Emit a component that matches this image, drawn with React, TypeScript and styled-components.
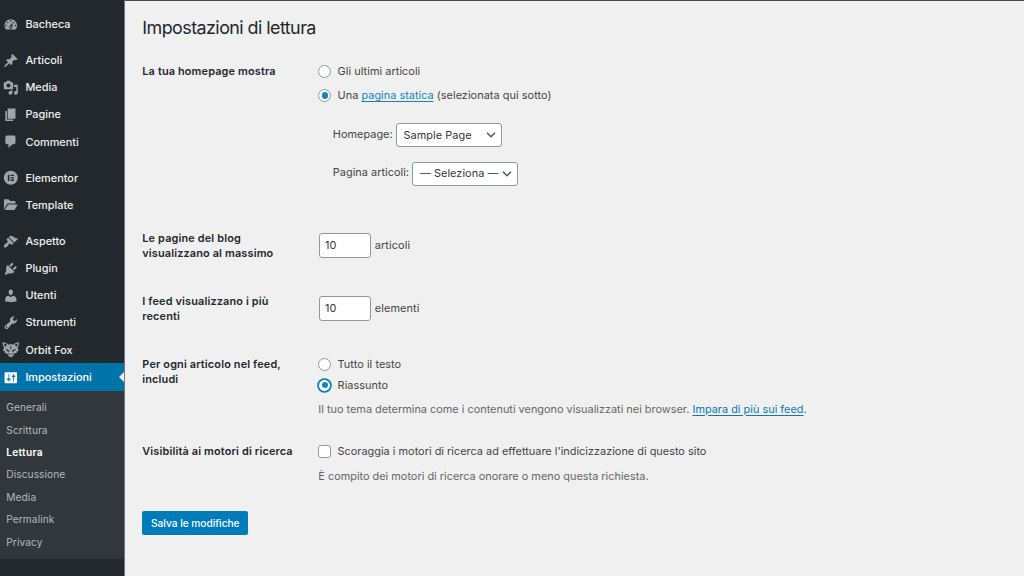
import React from 'react';
import styled, { createGlobalStyle, css } from 'styled-components';

const GlobalStyle = createGlobalStyle`
  *, *::before, *::after { box-sizing: border-box; }
  body {
    margin: 0;
    background: #f0f0f1;
    color: #444;
    font-family: Inter, "Liberation Sans", sans-serif;
    font-size: 10.9px;
    line-height: 15px;
    overflow: hidden;
  }
`;

const Page = styled.div`
  display: flex;
  height: 576px;
  overflow: hidden;
`;

/* ---------- sidebar ---------- */

const Sidebar = styled.nav`
  flex: none;
  width: 125px;
  height: 576px;
  padding-top: 10.4px;
  background: #23282d;
  border-right: 1px solid #75787b;
  overflow: hidden;
`;

const MenuGroup = styled.div`
  margin-bottom: 8.9px;
`;

const MenuItem = styled.a<{ $active?: boolean }>`
  position: relative;
  display: flex;
  align-items: center;
  gap: 6.8px;
  height: 27.2px;
  padding: 0.8px 0 0 3px;
  color: #eee;
  font-weight: 500;
  white-space: nowrap;
  svg { color: #a0a5aa; }
  ${p => p.$active && css`
    background: #0073aa;
    color: #fff;
    svg { color: #fff; }
    &::after {
      content: '';
      position: absolute;
      right: -1px;
      top: 7.6px;
      border: 6.2px solid transparent;
      border-left-width: 0;
      border-right-color: #f0f0f1;
    }
  `}
`;

const Icon = styled.svg`
  flex: none;
  width: 15.6px;
  height: 15.6px;
  fill: currentColor;
  overflow: visible;
`;

const SubMenu = styled.div`
  height: 168.7px;
  padding: 6px 0 0 6.3px;
  background: #32373c;
`;

const SubItem = styled.a<{ $current?: boolean }>`
  display: flex;
  align-items: center;
  height: 22.4px;
  font-size: 10.2px;
  letter-spacing: 0.06px;
  color: #b4b9be;
  ${p => p.$current && css`
    color: #fff;
    font-weight: 600;
    letter-spacing: 0.25px;
  `}
`;

const CollapseRow = styled.div`
  padding: 15.8px 0 0 4px;
  height: 17px;
  overflow: hidden;
  color: #a0a5aa;
`;

/* ---------- content ---------- */

const Content = styled.main`
  flex: 1;
  padding: 13px 0 0 17.3px;
  border-top: 1px solid #4a494f;
`;

const Title = styled.h1`
  margin: 0 0 18px;
  height: 28px;
  color: #23282d;
  font-size: 17.9px;
  font-weight: 400;
  line-height: 28px;
  letter-spacing: -0.55px;
`;

const Field = styled.section<{ $height: number }>`
  display: grid;
  grid-template-columns: 176px 1fr;
  align-items: start;
  height: ${p => p.$height}px;
`;

const FieldLabel = styled.div<{ $offset?: number }>`
  margin-top: ${p => p.$offset ?? 3}px;
  color: #23282d;
  font-weight: 600;
  letter-spacing: 0.15px;
  white-space: pre-line;
`;

const FieldBody = styled.div`
  display: flex;
  flex-direction: column;
  align-items: flex-start;
  letter-spacing: 0.05px;
  white-space: nowrap;
`;

const Choice = styled.label<{ $height?: number; $tight?: boolean }>`
  display: flex;
  align-items: center;
  gap: 6.3px;
  height: ${p => p.$height ?? 21}px;
  ${p => p.$tight && css`letter-spacing: 0.01px;`}
`;

const Radio = styled.span<{ $checked?: boolean; $focused?: boolean }>`
  display: flex;
  align-items: center;
  justify-content: center;
  width: 13px;
  height: 13px;
  border: 1px solid ${p => (p.$focused ? '#007cba' : '#9099a2')};
  border-radius: 50%;
  background: #fff;
  box-shadow: ${p => (p.$focused ? '0 0 0 0.8px #007cba' : 'none')};
  ${p => p.$checked && css`
    &::before {
      content: '';
      width: 6.4px;
      height: 6.4px;
      border-radius: 50%;
      background: #1684ba;
    }
  `}
`;

const Checkbox = styled.span`
  width: 13px;
  height: 13px;
  border: 1px solid #9099a2;
  border-radius: 3px;
  background: #fff;
`;

const Link = styled.a<{ $soft?: boolean }>`
  color: ${p => (p.$soft ? '#1684ba' : '#0d78af')};
  text-decoration: underline;
  text-underline-offset: 1.5px;
  text-decoration-thickness: 1px;
  letter-spacing: 0.01px;
`;

const SelectRow = styled.div<{ $top: number }>`
  display: flex;
  align-items: flex-start;
  gap: 3.4px;
  margin-top: ${p => p.$top}px;
  padding-left: 14.5px;
  height: 24px;
  > span { padding-top: 3.6px; letter-spacing: 0.03px; }
`;

const Select = styled.div`
  display: flex;
  align-items: center;
  justify-content: space-between;
  width: 106px;
  height: 24px;
  padding: 0 5.5px 0 6.5px;
  border: 1px solid #9099a2;
  border-radius: 3px;
  background: #fff;
  color: #32373c;
`;

const Chevron = styled.svg`
  width: 10px;
  height: 6px;
  fill: none;
  stroke: #50555a;
  stroke-width: 1.5;
`;

const NumberRow = styled.div`
  display: flex;
  align-items: center;
  gap: 3.8px;
  padding-left: 0.7px;
  letter-spacing: 0.1px;
`;

const NumberBox = styled.div`
  display: flex;
  align-items: center;
  width: 52px;
  height: 25px;
  padding-left: 5px;
  border: 1px solid #9099a2;
  border-radius: 3px;
  background: #fff;
  color: #32373c;
  letter-spacing: 0.2px;
`;

const Description = styled.p<{ $top: number }>`
  margin: ${p => p.$top}px 0 0;
  color: #666;
  letter-spacing: 0.004px;
`;

const SaveButton = styled.button`
  display: block;
  width: 106px;
  height: 24px;
  padding: 0;
  border: 0;
  border-radius: 2px;
  background: #007cba;
  color: #fff;
  font: 500 10.2px/24px Inter, "Liberation Sans", sans-serif;
  letter-spacing: -0.03px;
`;

/* ---------- data ---------- */

const icons: Record<string, string> = {
  dashboard: 'M3.76 16h12.48c1.1-1.37 1.76-3.11 1.76-5 0-4.42-3.58-8-8-8s-8 3.58-8 8c0 1.89.66 3.63 1.76 5zM10 4c.55 0 1 .45 1 1s-.45 1-1 1-1-.45-1-1 .45-1 1-1zM6 6c.55 0 1 .45 1 1s-.45 1-1 1-1-.45-1-1 .45-1 1-1zm8 0c.55 0 1 .45 1 1s-.45 1-1 1-1-.45-1-1 .45-1 1-1zm-5.37 5.55L12 7v6c0 1.1-.9 2-2 2s-2-.9-2-2c0-.57.24-1.08.63-1.45zM4 10c.55 0 1 .45 1 1s-.45 1-1 1-1-.45-1-1 .45-1 1-1zm12 0c.55 0 1 .45 1 1s-.45 1-1 1-1-.45-1-1 .45-1 1-1zm-5 3c0-.55-.45-1-1-1s-1 .45-1 1 .45 1 1 1 1-.45 1-1z',
  pin: 'M10.44 3.02l1.82-1.82 6.36 6.35-1.83 1.82c-1.05-.68-2.48-.57-3.41.36l-.75.75c-.92.93-1.04 2.35-.35 3.41l-1.83 1.82-2.41-2.41-2.8 2.79c-.42.42-3.38 2.71-3.8 2.29s1.86-3.39 2.28-3.81l2.79-2.79L4.1 9.36l1.83-1.82c1.05.69 2.48.57 3.4-.36l.75-.75c.93-.92 1.05-2.35.36-3.41z',
  media: 'M13 11V4c0-.55-.45-1-1-1h-1.67L9 1H5L3.67 3H2c-.55 0-1 .45-1 1v7c0 .55.45 1 1 1h10c.55 0 1-.45 1-1zM7 4.5c1.38 0 2.5 1.12 2.5 2.5S8.38 9.5 7 9.5 4.5 8.38 4.5 7 5.62 4.5 7 4.5zM14 6h5v10.5c0 1.38-1.12 2.5-2.5 2.5S14 17.88 14 16.5s1.12-2.5 2.5-2.5c.17 0 .34.02.5.05V9h-3V6zm-4 8.05V13h2v3.5c0 1.38-1.12 2.5-2.5 2.5S7 17.88 7 16.5 8.12 14 9.5 14c.17 0 .34.02.5.05z',
  page: 'M6 15V2h10v13H6zm-1 1h8v2H3V5h2v11z',
  comment: 'M5 2h9c1.1 0 2 .9 2 2v7c0 1.1-.9 2-2 2h-2l-5 5v-5H5c-1.1 0-2-.9-2-2V4c0-1.1.9-2 2-2z',
  elementor: 'M10 1a9 9 0 1 0 0 18a9 9 0 1 0 0-18zM6.2 6h1.9v8H6.2zM9.7 6h4.3v1.7H9.7zM9.7 9.15h4.3v1.7H9.7zM9.7 12.3h4.3V14H9.7z',
  folder: 'M1.2 16.2V4.2c0-.7.5-1.2 1.2-1.2h4.8l2 2.2h5.6c.7 0 1.2.5 1.2 1.2v1.8H6.8c-.8 0-1.5.4-1.9 1.1zM2.2 16.8l3.6-6.3c.3-.5.7-.8 1.3-.8h11.8l-3.6 6.3c-.3.5-.8.8-1.4.8z',
  brush: 'M14.48 11.06L7.41 3.99l1.5-1.5c.5-.56 2.3-.47 3.51.32 1.21.8 1.43 1.28 2.91 2.1 1.18.64 2.45 1.26 4.45.85zm-.71.71L6.7 4.7 4.93 6.47c-.39.39-.39 1.02 0 1.41l1.06 1.06c.39.39.39 1.03 0 1.42-.6.6-1.43 1.11-2.21 1.69-.35.26-.7.53-1.01.84C1.43 14.23.4 16.08 1.4 17.07c.99 1 2.84-.03 4.18-1.36.31-.31.58-.66.85-1.02.57-.78 1.08-1.61 1.69-2.21.39-.39 1.02-.39 1.41 0l1.06 1.06c.39.39 1.02.39 1.41 0z',
  plugin: 'M13.11 4.36L9.87 7.6 8 5.73l3.24-3.24c.35-.34 1.05-.2 1.56.32.52.51.66 1.21.31 1.55zm-8 1.77l.91-1.12 9.01 9.01-1.19.84c-.71.71-2.63 1.16-3.82 1.16H6.14L4.9 17.26c-.59.59-1.54.59-2.12 0-.59-.58-.59-1.53 0-2.12l1.24-1.24v-3.88c0-1.13.4-3.19 1.09-3.89zm7.26 3.97l3.24-3.24c.34-.35 1.04-.21 1.55.31.52.51.66 1.21.31 1.55l-3.24 3.25z',
  user: 'M10 9.25c-2.27 0-2.73-3.44-2.73-3.44C7 4.02 7.82 2 9.97 2c2.16 0 2.98 2.02 2.71 3.81 0 0-.41 3.44-2.68 3.44zm0 2.57L12.72 10c2.39 0 4.52 2.33 4.52 4.53v2.49s-3.65 1.13-7.24 1.13c-3.65 0-7.24-1.13-7.24-1.13v-2.49c0-2.25 1.94-4.48 4.47-4.48z',
  wrench: 'M16.68 9.77c-1.34 1.34-3.3 1.67-4.95.99l-5.41 6.52c-.99.99-2.59.99-3.58 0s-.99-2.59 0-3.57l6.52-5.42c-.68-1.65-.35-3.61.99-4.95 1.28-1.28 3.12-1.62 4.72-1.06l-2.89 2.89 2.82 2.82 2.86-2.87c.53 1.58.18 3.39-1.08 4.65zM3.81 16.21c.4.39 1.04.39 1.43 0 .4-.4.4-1.04 0-1.43-.39-.4-1.03-.4-1.43 0-.39.39-.39 1.03 0 1.43z',
  fox: 'M-.4 .2C2.6 .2 5 1.6 6.8 3.4C8.8 2.8 11.2 2.8 13.2 3.4C15 1.6 17.4 .2 20.4 .2C20.6 2.8 19.8 5.4 18.6 7.2L20.2 11.6L17.8 11.8L17.6 14L15 14.4L12.6 18.4L10 19.6L7.4 18.4L5 14.4L2.4 14L2.2 11.8L-.2 11.6L1.4 7.2C.2 5.4-.6 2.8-.4 .2zM1.2 1.8C1.4 3.6 1.9 4.8 2.6 6L5 3.8C4 2.8 2.6 2 1.2 1.8zM18.8 1.8C17.4 2 16 2.8 15 3.8L17.4 6C18.1 4.8 18.6 3.6 18.8 1.8zM3.4 8.2L8.6 11.2L8 12.4C6 12.4 4.2 10.8 3.4 8.2zM16.6 8.2L11.4 11.2L12 12.4C14 12.4 15.8 10.8 16.6 8.2zM9.4 5h1.2v4.4H9.4zM6.2 13.6L9.2 15.4L8.8 16.6C7.6 16 6.8 15 6.2 13.6zM13.8 13.6L10.8 15.4L11.2 16.6C12.4 16 13.2 15 13.8 13.6z',
  settings: 'M18 16V4c0-.55-.45-1-1-1H3c-.55 0-1 .45-1 1v12c0 .55.45 1 1 1h14c.55 0 1-.45 1-1zM8 11h1c.55 0 1 .45 1 1s-.45 1-1 1H8v1.5c0 .28-.22.5-.5.5s-.5-.22-.5-.5V13H6c-.55 0-1-.45-1-1s.45-1 1-1h1V5.5c0-.28.22-.5.5-.5s.5.22.5.5V11zm5-2h-1c-.55 0-1-.45-1-1s.45-1 1-1h1V5.5c0-.28.22-.5.5-.5s.5.22.5.5V7h1c.55 0 1 .45 1 1s-.45 1-1 1h-1v5.5c0 .28-.22.5-.5.5s-.5-.22-.5-.5V9z',
  collapse: 'M10 2.2a8 8 0 1 0 0 16a8 8 0 1 0 0-16zM12.6 14.6L6.8 10.2l5.8-4.4z',
};

const menu: [string, string][][] = [
  [['dashboard', 'Bacheca']],
  [['pin', 'Articoli'], ['media', 'Media'], ['page', 'Pagine'], ['comment', 'Commenti']],
  [['elementor', 'Elementor'], ['folder', 'Template']],
];

const adminMenu: [string, string][] = [
  ['brush', 'Aspetto'],
  ['plugin', 'Plugin'],
  ['user', 'Utenti'],
  ['wrench', 'Strumenti'],
  ['fox', 'Orbit Fox'],
];

const subMenu = ['Generali', 'Scrittura', 'Lettura', 'Discussione', 'Media', 'Permalink', 'Privacy'];

function Glyph({ name }: { name: string }) {
  return (
    <Icon viewBox="0 0 20 20" aria-hidden>
      <path d={icons[name]} fillRule="evenodd" />
    </Icon>
  );
}

function Entry({ icon, label, active }: { icon: string; label: string; active?: boolean }) {
  return (
    <MenuItem $active={active}>
      <Glyph name={icon} />
      {label}
    </MenuItem>
  );
}

function Dropdown({ value }: { value: string }) {
  return (
    <Select>
      {value}
      <Chevron viewBox="0 0 10 6"><path d="M1 0.8l4 4 4-4" /></Chevron>
    </Select>
  );
}

export default function App() {
  return (
    <>
      <GlobalStyle />
      <Page>
        <Sidebar>
          {menu.map((group, i) => (
            <MenuGroup key={i}>
              {group.map(([icon, label]) => <Entry key={label} icon={icon} label={label} />)}
            </MenuGroup>
          ))}
          {adminMenu.map(([icon, label]) => <Entry key={label} icon={icon} label={label} />)}
          <Entry icon="settings" label="Impostazioni" active />
          <SubMenu>
            {subMenu.map(label => (
              <SubItem key={label} $current={label === 'Lettura'}>{label}</SubItem>
            ))}
          </SubMenu>
          <CollapseRow><Glyph name="collapse" /></CollapseRow>
        </Sidebar>

        <Content>
          <Title>Impostazioni di lettura</Title>

          <Field $height={173}>
            <FieldLabel $offset={4}>La tua homepage mostra</FieldLabel>
            <FieldBody>
              <Choice $height={23}><Radio />Gli ultimi articoli</Choice>
              <Choice $height={25}>
                <Radio $checked />
                <span>Una <Link $soft>pagina statica</Link> (selezionata qui sotto)</span>
              </Choice>
              <SelectRow $top={15}><span>Homepage:</span><Dropdown value="Sample Page" /></SelectRow>
              <SelectRow $top={14.5}><span>Pagina articoli:</span><Dropdown value="— Seleziona —" /></SelectRow>
            </FieldBody>
          </Field>

          <Field $height={63}>
            <FieldLabel $offset={-2}>{'Le pagine del blog\nvisualizzano al massimo'}</FieldLabel>
            <FieldBody>
              <NumberRow><NumberBox>10</NumberBox>articoli</NumberRow>
            </FieldBody>
          </Field>

          <Field $height={57.5}>
            <FieldLabel $offset={-2}>{'I feed visualizzano i più\nrecenti'}</FieldLabel>
            <FieldBody>
              <NumberRow><NumberBox>10</NumberBox>elementi</NumberRow>
            </FieldBody>
          </Field>

          <Field $height={87.5}>
            <FieldLabel>{'Per ogni articolo nel feed,\nincludi'}</FieldLabel>
            <FieldBody>
              <Choice><Radio />Tutto il testo</Choice>
              <Choice><Radio $checked $focused />Riassunto</Choice>
              <Description $top={6}>
                Il tuo tema determina come i contenuti vengono visualizzati nei browser. <Link>Impara di più sui feed</Link>.
              </Description>
            </FieldBody>
          </Field>

          <Field $height={70}>
            <FieldLabel>Visibilità ai motori di ricerca</FieldLabel>
            <FieldBody>
              <Choice $tight><Checkbox />Scoraggia i motori di ricerca ad effettuare l'indicizzazione di questo sito</Choice>
              <Description $top={6.5}>È compito dei motori di ricerca onorare o meno questa richiesta.</Description>
            </FieldBody>
          </Field>

          <SaveButton>Salva le modifiche</SaveButton>
        </Content>
      </Page>
    </>
  );
}
